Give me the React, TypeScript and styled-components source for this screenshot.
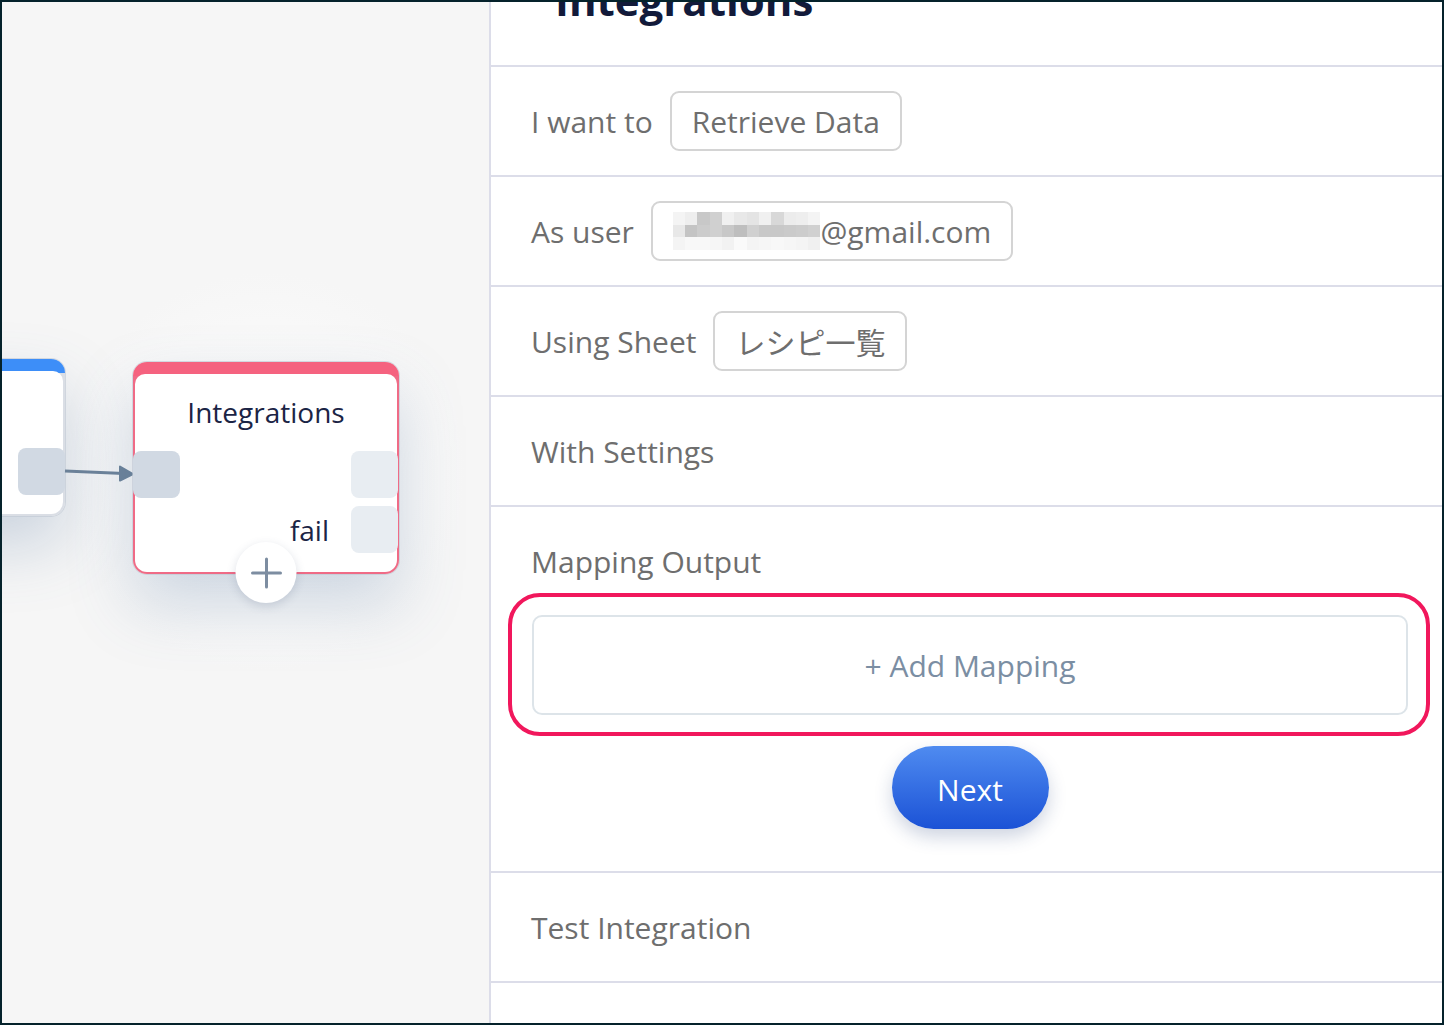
import React from 'react';
import styled, { createGlobalStyle } from 'styled-components';

const GlobalStyle = createGlobalStyle`
  html, body {
    margin: 0;
    padding: 0;
    background: #05222b;
  }
  body {
    font-family: 'Open Sans', 'Noto Sans CJK JP', sans-serif;
  }
  * {
    box-sizing: border-box;
  }
`;

const Frame = styled.div`
  width: 1444px;
  height: 1025px;
  border: 2px solid #05222b;
  display: grid;
  grid-template-columns: 487px 1fr;
  overflow: hidden;
  background: #fff;
`;

const Canvas = styled.div`
  position: relative;
  overflow: hidden;
  background: radial-gradient(circle at 264px 470px, #fafafa 0, #f8f8f8 150px, #f6f6f6 200px);
`;

// top bar in the accent colour, thin frame in the edge colour
const Node = styled.div<{ accent: string; edge: string }>`
  position: absolute;
  background: linear-gradient(${({ accent }) => accent} 0 14px, ${({ edge }) => edge} 14px);
  border-radius: 14px;
  padding: 12px 2px 2px 2px;
  display: flex;
  box-shadow: 0 0 0 1px rgba(190, 198, 210, 0.6), 0 30px 64px rgba(80, 115, 160, 0.26);
`;

const NodeBody = styled.div`
  flex: 1;
  background: #fff;
  border-radius: 10px 10px 12px 12px;
  display: flex;
  flex-direction: column;
  align-items: center;
`;

const NodeTitle = styled.div`
  margin-top: 22px;
  font-size: 28px;
  line-height: 32px;
  color: #1b2445;
`;

const Port = styled.div<{ tone: 'in' | 'out' }>`
  position: absolute;
  width: 47px;
  height: 47px;
  border-radius: 8px;
  background: ${({ tone }) => (tone === 'in' ? '#d1d9e3' : '#e8edf2')};
`;

const PortLabel = styled.span`
  position: absolute;
  font-size: 28px;
  line-height: 32px;
  color: #1b2445;
`;

const AddButton = styled.div`
  position: absolute;
  left: 50%;
  bottom: -29px;
  transform: translateX(-50%);
  width: 61px;
  height: 61px;
  border-radius: 50%;
  background: #fff;
  box-shadow: 0 3px 10px rgba(60, 80, 110, 0.18);
  display: flex;
  align-items: center;
  justify-content: center;
`;

const Edge = styled.svg`
  position: absolute;
  left: 60px;
  top: 458px;
  overflow: visible;
`;

const Panel = styled.div`
  border-left: 2px solid #dcdde9;
  display: flex;
  flex-direction: column;
  overflow: hidden;
  background: #fff;
`;

const Header = styled.div`
  flex: none;
  height: 65px;
  border-bottom: 2px solid #dcdde9;
  padding-left: 64px;
  overflow: hidden;
`;

const Title = styled.h1`
  margin: -23px 0 0 0;
  font-size: 42px;
  line-height: 42px;
  font-weight: 700;
  color: #121a3a;
`;

const Row = styled.div`
  flex: none;
  height: 110px;
  border-bottom: 2px solid #dcdde9;
  padding-left: 40px;
  display: flex;
  align-items: center;
  gap: 17px;
`;

const Label = styled.span`
  font-size: 30px;
  line-height: 41px;
  color: #6e6e6e;
`;

const Chip = styled.div`
  height: 60px;
  padding: 0 20px;
  border: 2px solid #d4d4d4;
  border-radius: 9px;
  display: flex;
  align-items: center;
  font-size: 30px;
  color: #6e6e6e;
`;

const Masked = styled.div`
  display: grid;
  grid-template-columns: repeat(12, 12.3px);
  grid-auto-rows: 12.5px;
`;

const Cell = styled.span<{ shade: string }>`
  background: ${({ shade }) => shade};
`;

const MappingSection = styled.div`
  flex: none;
  border-bottom: 2px solid #dcdde9;
  padding: 34px 12px 42px 17px;
  display: flex;
  flex-direction: column;
`;

const MappingLabel = styled(Label)`
  padding-left: 23px;
`;

const Highlight = styled.div`
  margin-top: 11px;
  border: 4px solid #f1175c;
  border-radius: 32px;
  padding: 18px 18px 17px 20px;
`;

const AddMapping = styled.div`
  height: 100px;
  border: 2px solid #dde4e9;
  border-radius: 10px;
  display: flex;
  align-items: center;
  justify-content: center;
  font-size: 30px;
  color: #7b8ea3;
`;

const Actions = styled.div`
  margin: 10px 22px 0 24px;
  display: flex;
  justify-content: center;
`;

const NextButton = styled.button`
  width: 157px;
  height: 83px;
  padding-top: 4px;
  border: none;
  border-radius: 42px;
  background: linear-gradient(180deg, #4f8bf0 0%, #1b52d6 100%);
  color: #fff;
  font-family: 'Open Sans', sans-serif;
  font-size: 30px;
  box-shadow: 0 8px 18px rgba(30, 60, 120, 0.22);
`;

const maskRows = [
  ['#f4f4f4', '#eeeeee', '#c8c8c8', '#d0d0d0', '#f0f0f0', '#e8e8e8', '#e4e4e4', '#f0f0f0', '#d8d8d8', '#ececec', '#eeeeee', '#f4f4f4'],
  ['#e8e8e8', '#c4c4c4', '#cccccc', '#d0d0d0', '#c8c8c8', '#bebebe', '#d0d0d0', '#c8c8c8', '#c8c8c8', '#cacaca', '#cccccc', '#d0d0d0'],
  ['#f4f4f4', '#f8f8f8', '#f8f8f8', '#f6f6f6', '#f2f2f2', '#fafafa', '#f4f4f4', '#f6f6f6', '#f8f8f8', '#f6f6f6', '#f4f4f4', '#f0f0f0'],
];

const App = () => (
  <>
    <GlobalStyle />
    <Frame>
      <Canvas>
        <Node accent="#3d8ef8" edge="#dadee5" style={{ left: -140, top: 357, width: 203, height: 157 }}>
          <NodeBody />
          <Port tone="in" style={{ right: 0, top: 89 }} />
        </Node>
        <Edge width="72" height="24" viewBox="0 0 72 24">
          <line x1="3" y1="11" x2="62" y2="13.6" stroke="#6c8299" strokeWidth="3" />
          <path d="M58 6.5 L71 14 L58 20.5 Z" fill="#6c8299" strokeLinejoin="round" stroke="#6c8299" strokeWidth="2" />
        </Edge>
        <Node accent="#f5627f" edge="#ef6b86" style={{ left: 131, top: 360, width: 266, height: 212 }}>
          <NodeBody>
            <NodeTitle>Integrations</NodeTitle>
          </NodeBody>
          <Port tone="in" style={{ left: 0, top: 89 }} />
          <Port tone="out" style={{ right: 1, top: 89 }} />
          <Port tone="out" style={{ right: 1, top: 144 }} />
          <PortLabel style={{ right: 70, top: 152 }}>fail</PortLabel>
          <AddButton>
            <svg width="32" height="32" viewBox="0 0 32 32">
              <path d="M16 2 V30 M2 16 H30" stroke="#7d8da1" strokeWidth="3" strokeLinecap="round" />
            </svg>
          </AddButton>
        </Node>
      </Canvas>
      <Panel>
        <Header>
          <Title>Integrations</Title>
        </Header>
        <Row>
          <Label>I want to</Label>
          <Chip>Retrieve Data</Chip>
        </Row>
        <Row>
          <Label>As user</Label>
          <Chip>
            <Masked>
              {maskRows.flat().map((shade, i) => (
                <Cell key={i} shade={shade} />
              ))}
            </Masked>
            @gmail.com
          </Chip>
        </Row>
        <Row>
          <Label>Using Sheet</Label>
          <Chip>レシピ一覧</Chip>
        </Row>
        <Row>
          <Label>With Settings</Label>
        </Row>
        <MappingSection>
          <MappingLabel>Mapping Output</MappingLabel>
          <Highlight>
            <AddMapping>+ Add Mapping</AddMapping>
          </Highlight>
          <Actions>
            <NextButton>Next</NextButton>
          </Actions>
        </MappingSection>
        <Row>
          <Label>Test Integration</Label>
        </Row>
        <Row />
      </Panel>
    </Frame>
  </>
);

export default App;
